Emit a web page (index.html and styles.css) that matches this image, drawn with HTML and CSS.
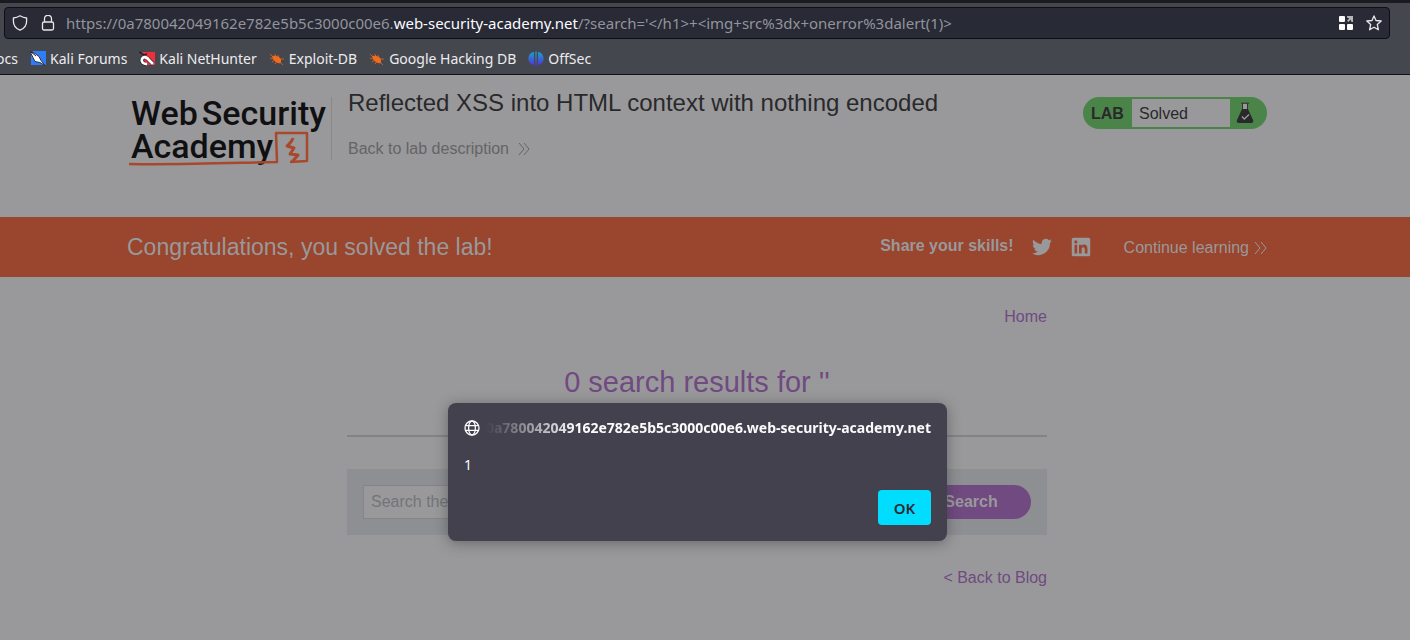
FILE: index.html
```html
<!DOCTYPE html>
<html lang="en">
<head>
<meta charset="utf-8">
<title>Reflected XSS into HTML context with nothing encoded</title>
<link rel="stylesheet" href="styles.css">
</head>
<body>
<div class="browser">
  <div class="toolbar">
    <div class="urlbar">
      <svg class="icon" viewBox="0 0 16 16" aria-hidden="true"><path d="M8 .8c2 1.3 4.300 2 6.600 2.200v3.200c0 4-2.300 7.200-6.600 9-4.300-1.800-6.600-5-6.600-9V3C3.700 2.800 6 2.100 8 .8z" fill="none" stroke="#e8e8ec" stroke-width="1.300" stroke-linejoin="round"/></svg>
      <svg class="icon lock" viewBox="0 0 16 16" aria-hidden="true"><path d="M4.500 7V3.800a3.500 3.500 0 0 1 7 0V7M4 7h8a1.500 1.500 0 0 1 1.500 1.500v5A1.500 1.500 0 0 1 12 15H4a1.500 1.500 0 0 1-1.500-1.500v-5A1.500 1.500 0 0 1 4 7z" fill="none" stroke="#e8e8ec" stroke-width="1.300"/></svg>
      <span class="url">https://0a780042049162e782e5b5c3000c00e6.<b>web-security-academy.net</b>/?search='&lt;/h1&gt;+&lt;img+src%3dx+onerror%3dalert(1)&gt;</span>
      <svg class="icon" viewBox="0 0 16 16" aria-hidden="true"><g fill="#fff"><rect x="1" y="1" width="6" height="6" rx="1"/><rect x="1" y="9" width="6" height="6" rx="1"/><rect x="9" y="9" width="6" height="6" rx="1"/></g><path d="M9 1h6v6h-1.500L12.600 4.800 10.300 7 9 5.700l2.200-2.300L9 2.500z" fill="#b5b5ba"/></svg>
      <svg class="icon star" viewBox="0 0 16 16" aria-hidden="true"><path d="M8 .9l2 4.600 5.200.5-3.900 3.500 1.100 5.300L8 12.200l-4.400 2.600 1.100-5.300L.8 6 6 5.500z" fill="none" stroke="#e8e8ec" stroke-width="1.300" stroke-linejoin="round"/></svg>
    </div>
  </div>
  <nav class="bookmarks" aria-label="Bookmarks">
    <a class="bookmark clipped" href="#"><span>ocs</span></a>
    <a class="bookmark" href="#"><svg class="fav" viewBox="0 0 16 16" aria-hidden="true"><path d="M3 0h13v14H4L1 14V5z" fill="#2f7df6"/><path d="M0 .5l5 2 4 3 2 4 4 5-5-3-5-1-2-4z" fill="#fff" stroke="#222630" stroke-width=".9"/><path d="M1 1l5 4" stroke="#222630"/></svg><span>Kali Forums</span></a>
    <a class="bookmark" href="#"><svg class="fav" viewBox="0 0 16 16" aria-hidden="true"><path d="M3 1h13v13H6z" fill="#ef2f3c"/><path d="M0 1l5 3 3-1" fill="none" stroke="#20222a" stroke-width="1.500"/><path d="M14 13l-4-4C8 6 4 5 3 8s1 5 5 5" fill="none" stroke="#20222a" stroke-width="4"/><path d="M14 13l-4-4C8 6 4 5 3 8s1 5 5 5" fill="none" stroke="#fff" stroke-width="2.800"/></svg><span>Kali NetHunter</span></a>
    <a class="bookmark" href="#"><svg class="fav" viewBox="0 0 16 16" aria-hidden="true"><path d="M3 5c3-1 7 0 9 3l0 4c-3 1-6-1-8-4z" fill="#f26a1b"/><path d="M1 3l3 3M1 7l4 1M3 11l3-2M6 3l1 3M9 4l1 3M12 8l3 0M11 11l3 3M6 13l2-3" stroke="#f26a1b" stroke-width=".7"/></svg><span>Exploit-DB</span></a>
    <a class="bookmark" href="#"><svg class="fav" viewBox="0 0 16 16" aria-hidden="true"><path d="M3 5c3-1 7 0 9 3l0 4c-3 1-6-1-8-4z" fill="#f26a1b"/><path d="M1 3l3 3M1 7l4 1M3 11l3-2M6 3l1 3M9 4l1 3M12 8l3 0M11 11l3 3M6 13l2-3" stroke="#f26a1b" stroke-width=".7"/></svg><span>Google Hacking DB</span></a>
    <a class="bookmark" href="#"><svg class="fav" viewBox="0 0 16 16" aria-hidden="true"><defs><linearGradient id="os" gradientUnits="userSpaceOnUse" x1="0" y1="0" x2="0" y2="16"><stop stop-color="#16a8c9"/><stop offset="1" stop-color="#5a25d8"/></linearGradient></defs><path d="M6 1v13C-1.500 13-1.500 2 6 1zM10 1v13c7.500-1 7.500-12 0-13zM7.300.5h1.400v15H7.300z" fill="url(#os)"/></svg><span>OffSec</span></a>
  </nav>
</div>

<main class="page">
  <header class="lab-header">
    <div class="container head-row">
      <div class="logo">
        <div class="logo-line"><span>Web</span><span>Security</span></div>
        <div class="logo-line"><span>Academy</span></div>
        <svg class="logo-art" viewBox="0 0 184 36" aria-hidden="true"><g fill="none" stroke="#a8482d" stroke-width="2.500" stroke-linejoin="round"><path d="M2 33c50 1 100-1 148-2l-1-29 31 0 0 28-17 1" /><path d="M166 7c-1 4-3 5-6 8l7 2-4 6 8 1-6 7" stroke-width="3"/></g></svg>
      </div>
      <div class="title">
        <h2>Reflected XSS into HTML context with nothing encoded</h2>
        <a class="back" href="#">Back to lab description <svg class="chev" viewBox="0 0 14 14" aria-hidden="true"><path d="M2 1l5 6-5 6M7 1l5 6-5 6"/></svg></a>
      </div>
      <div class="status">
        <strong>LAB</strong><span class="state">Solved</span>
        <svg class="flask" viewBox="0 0 18 22" aria-hidden="true"><path d="M6.500 1.500v6M11.500 1.500v6M5 1.200h8" stroke="#333335" stroke-width="1" fill="none"/><path d="M7 2h4v5H7z" fill="#99999b"/><path d="M6 7h6l5 11q1 3-2 3H3q-3 0-2-3z" fill="#29292b"/><path d="M6 14.500l2.300 2.500L13 12.500" stroke="#99999b" stroke-width="1.300" fill="none"/></svg>
      </div>
    </div>
  </header>

  <section class="banner">
    <div class="container banner-row">
      <p class="congrats">Congratulations, you solved the lab!</p>
      <strong class="share">Share your skills!</strong>
      <a class="social" href="#" aria-label="Twitter"><svg viewBox="0 0 24 24"><path d="M23.950 4.600a10 10 0 0 1-2.800.8 4.900 4.900 0 0 0 2.100-2.700 9.900 9.900 0 0 1-3.100 1.200 4.900 4.900 0 0 0-8.400 4.500A14 14 0 0 1 1.700 3.200a4.900 4.900 0 0 0 1.500 6.500 4.900 4.900 0 0 1-2.200-.6 4.900 4.900 0 0 0 3.900 4.900 5 5 0 0 1-2.200.1 4.900 4.900 0 0 0 4.600 3.400A9.900 9.900 0 0 1 0 19.500 14 14 0 0 0 21.500 7.100a10 10 0 0 0 2.450-2.500z"/></svg></a>
      <a class="social" href="#" aria-label="LinkedIn"><svg viewBox="-1 -1 26 26"><path fill-rule="evenodd" d="M2 0h20q2 0 2 2v20q0 2-2 2H2q-2 0-2-2V2Q0 0 2 0zM3.600 9v11.400h3.500V9zM5.300 3.300a2.100 2.100 0 1 0 0 4.200 2.100 2.100 0 0 0 0-4.200zM9.400 9v11.400h3.500v-5.600c0-3.700 4-3.300 4 0v5.600h3.500v-6.200c0-6-5.300-6.600-7.500-3.600V9z"/></svg></a>
      <a class="continue" href="#">Continue learning <svg class="chev" viewBox="0 0 14 14" aria-hidden="true"><path d="M2 1l5 6-5 6M8 1l5 6-5 6"/></svg></a>
    </div>
  </section>

  <section class="blog">
    <nav class="home"><a href="#">Home</a></nav>
    <h1>0 search results for ''</h1>
    <hr>
    <form class="search">
      <input type="text" placeholder="Search the blog..." aria-label="Search the blog">
      <button type="button">Search</button>
    </form>
    <p class="to-blog"><a href="#">&lt; Back to Blog</a></p>
  </section>
</main>

<div class="dialog" role="alertdialog" aria-label="Site message" aria-describedby="message">
  <div class="origin">
    <svg class="icon" viewBox="0 0 16 16" aria-hidden="true"><g fill="none" stroke="#fbfbfe" stroke-width="1.300"><circle cx="8" cy="8" r="7"/><ellipse cx="8" cy="8" rx="3.400" ry="7"/><path d="M1.600 5.600h12.800M1.600 10.400h12.800"/></g></svg>
    <div class="host"><span>0a780042049162e782e5b5c3000c00e6.web-security-academy.net</span></div>
  </div>
  <p id="message">1</p>
  <div class="actions"><button type="button">OK</button></div>
</div>
</body>
</html>
```

FILE: styles.css
```css
* { box-sizing: border-box; }

body {
  margin: 0;
  min-height: 100vh;
  position: relative;
  overflow: hidden;
  background: #99999b;
  font: 16px/24px "Liberation Sans", Arial, sans-serif;
  color: #29292b;
}

a { color: inherit; text-decoration: none; }
h1, h2, p { margin: 0; font-weight: 400; }
svg { display: block; flex: none; }

.browser {
  background: #45474e;
  border-top: 3px solid #1a1b20;
  border-bottom: 1px solid #111216;
  font: 14px/20px "Noto Sans", sans-serif;
  color: #ececef;
}
.toolbar { padding: 4px 20px 0 4px; }
.urlbar {
  display: flex;
  align-items: center;
  height: 32px;
  padding: 0 7px;
  background: #282a36;
  border: 1px solid #0e0f14;
  border-radius: 4px;
}
.icon { width: 16px; height: 16px; }
.lock { margin-left: 12px; }
.star { margin-left: 12px; }
.url {
  flex: 1;
  margin-left: 10px;
  font-size: 15px;
  white-space: nowrap;
  color: #93949b;
}
.url b { font-weight: 400; color: #fbfbfe; }
.bookmarks { display: flex; gap: 12px; padding: 10px 0 5px; }
.bookmark { display: flex; align-items: center; gap: 4px; white-space: nowrap; }
.clipped { width: 18px; justify-content: flex-end; }
.fav { width: 16px; height: 16px; }

.page { padding-right: 16px; }
.container { width: 100%; max-width: 1140px; margin: 0 auto; }

.head-row {
  display: flex;
  align-items: flex-start;
  height: 142px;
  padding-top: 22px;
}
.logo {
  position: relative;
  width: 205px;
  height: 63px;
  padding-left: 4px;
  border-right: 1px solid #88888b;
  font: 500 34px/33px Roboto, sans-serif;
  color: #101012;
}
.logo-line { display: flex; gap: 4px; white-space: nowrap; }
.logo-art { position: absolute; left: 0; top: 34px; width: 184px; height: 36px; }
.title { flex: 1; padding-left: 16px; }
.title h2 { font-size: 24px; line-height: 12px; }
.back {
  display: inline-flex;
  align-items: center;
  gap: 8px;
  margin-top: 28px;
  color: #646466;
}
.chev { width: 14px; height: 14px; fill: none; stroke: currentColor; stroke-width: 1; }

.status {
  display: flex;
  align-items: center;
  height: 32px;
  width: 184px;
  padding: 2px 2px 2px 8px;
  background: #4a8449;
  border-radius: 16px;
}
.status strong { width: 41px; padding-top: 2px; }
.state { flex: 0 0 98px; height: 28px; padding: 3px 7px; background: #99999b; }
.flask { width: 18px; height: 22px; margin-left: 6px; }

.banner { margin-right: -16px; padding-right: 16px; background: #9a452d; color: #99999b; }
.banner-row { display: flex; align-items: center; height: 60px; }
.congrats { flex: 1; font-size: 23px; }
.share { margin: 0 18px 2px 0; }
.social { margin-right: 19px; }
.social svg { width: 20px; height: 20px; fill: #99999b; }
.continue { display: flex; align-items: center; gap: 4px; margin-left: 14px; padding-top: 2px; }

.blog { max-width: 700px; margin: 0 auto; padding-top: 28px; color: #704a80; }
.home { text-align: right; }
.blog h1 { margin: 35px 0; font-size: 29px; line-height: 36px; text-align: center; }
.blog hr { margin: 0; height: 2px; border: 0; background: #838386; }
.search {
  display: flex;
  margin-top: 32px;
  padding: 16px;
  background: #8d8f93;
}
.search input {
  flex: 1;
  min-width: 0;
  height: 34px;
  padding: 0 7px;
  border: 1px solid #858589;
  background: #99999b;
  font: inherit;
}
.search input::placeholder { color: #747477; opacity: 1; }
.search button {
  width: 120px;
  height: 34px;
  border: 0;
  border-radius: 0 17px 17px 0;
  background: #704a80;
  color: #99999b;
  font: bold 16px/24px "Liberation Sans", Arial, sans-serif;
}
.to-blog { margin-top: 31px; text-align: right; }

.dialog {
  position: absolute;
  top: 403px;
  left: 50%;
  width: 499px;
  margin-left: -257px;
  padding: 16px;
  border-radius: 8px;
  background: #42414d;
  box-shadow: 0 2px 14px rgba(30, 30, 35, 0.4);
  color: #fbfbfe;
  font: 14px/18px "Noto Sans", sans-serif;
}
.origin { display: flex; align-items: center; gap: 6px; }
.host {
  flex: 1;
  display: flex;
  justify-content: flex-end;
  overflow: hidden;
  font-weight: 700;
  white-space: nowrap;
  -webkit-mask-image: linear-gradient(to right, transparent, #000 90px);
  mask-image: linear-gradient(to right, transparent, #000 90px);
}
.dialog p { margin: 19px 0 16px; }
.actions { display: flex; justify-content: flex-end; }
.actions button {
  width: 53px;
  height: 35px;
  border: 0;
  border-radius: 4px;
  background: #00ddff;
  color: #2b2a33;
  font: 600 15px/18px "Noto Sans", sans-serif;
}
```
